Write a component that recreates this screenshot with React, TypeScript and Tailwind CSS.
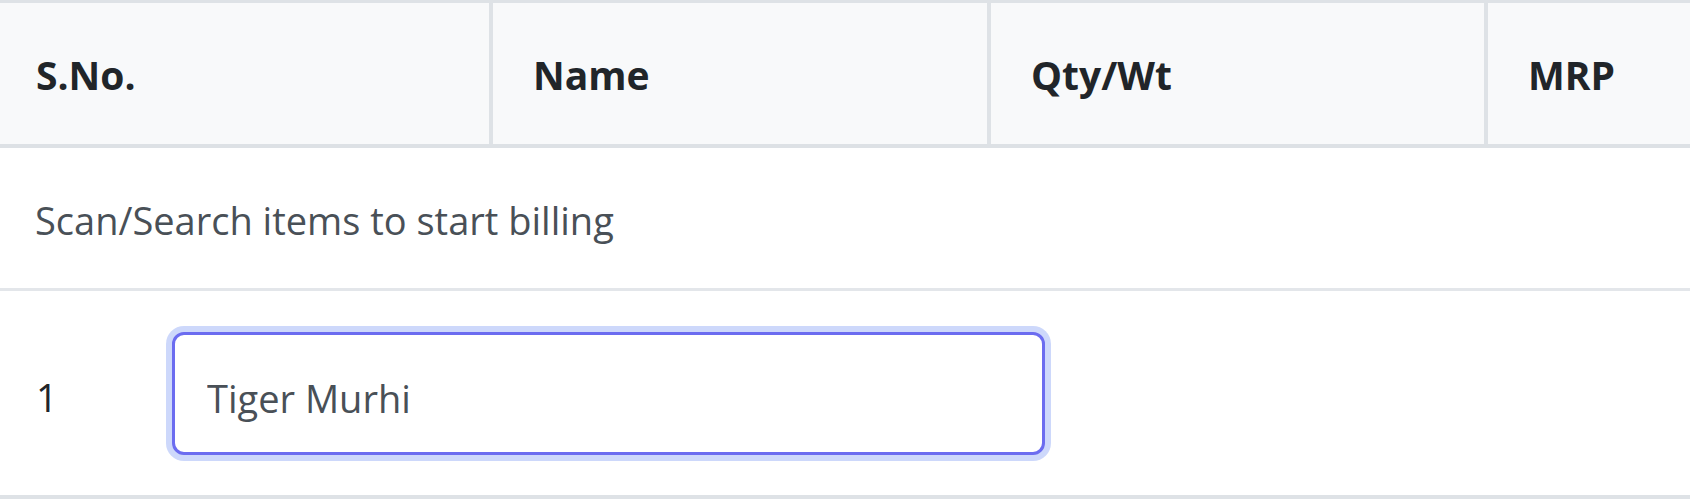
export default function App() {
  const columns = ["S.No.", "Name", "Qty/Wt", "MRP"];

  return (
    <div className="w-[1690px] h-[499px] overflow-hidden bg-white font-['Open_Sans',sans-serif] text-[#212529]">
      <div className="w-[2000px] border-t-[3px] border-[#dee2e6]">
        {/* header */}
        <div className="grid grid-cols-[493px_498px_497px_512px] h-[145px] bg-[#f8f9fa] border-b-[4px] border-[#dde1e5]">
          {columns.map((col, i) => (
            <div
              key={col}
              className={`flex items-center pt-[4px] border-r-[4px] border-[#dee2e6] text-[39px] font-bold ${
                i === 0 ? "pl-[36px]" : "pl-[40px]"
              }`}
            >
              {col}
            </div>
          ))}
        </div>

        {/* empty message */}
        <div className="h-[143px] flex items-center pl-[35px] pt-[4px] border-b-[3px] border-[#e3e6ea] text-[38px] text-[#495057]">
          Scan/Search items to start billing
        </div>

        {/* entry row */}
        <div className="h-[208px] flex items-center border-b-[4px] border-[#dee2e6]">
          <div className="w-[172px] pl-[36px] pt-[9px] text-[38px] text-[#212529]">1</div>
          <input
            type="text"
            defaultValue="Tiger Murhi"
            className="w-[873px] h-[123px] rounded-[12px] border-[3px] border-[#6b6cf0] bg-white pl-[32px] pt-[9px] text-[38px] text-[#495057] outline-none ring-[6px] ring-[#cdd8fb]"
          />
        </div>
      </div>
    </div>
  );
}
